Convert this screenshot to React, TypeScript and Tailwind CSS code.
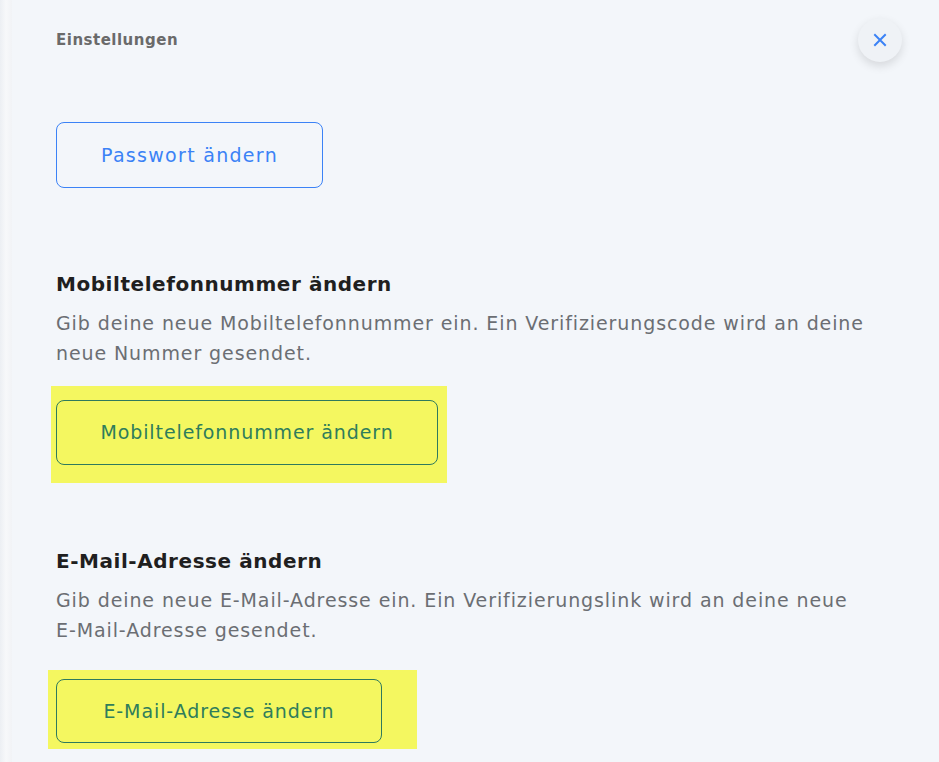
import React from "react";

const font = { fontFamily: '"DejaVu Sans", "Noto Sans", sans-serif' };

const Section = ({ title, children, label, hlClass, btnClass }: any) => (
  <div className="flex flex-col">
    <h2 className="text-[20px] font-bold text-[#1f1f1f] leading-[28px] tracking-[0.55px]">{title}</h2>
    <p className="mt-[10px] text-[19px] leading-[30px] text-[#6b6e73] tracking-[0.9px]">{children}</p>
    <div className={`bg-[#f4f760] self-start ${hlClass}`}>
      <button className={`rounded-[8px] border border-[#2f7a5d] text-[#2f7d5b] text-[19px] tracking-[0.9px] ${btnClass}`}>
        {label}
      </button>
    </div>
  </div>
);

export default function App() {
  return (
    <div className="w-[939px] h-[762px] bg-[#f3f6fa] flex flex-row overflow-hidden" style={font}>
      <div className="w-[12px] shrink-0 bg-gradient-to-r from-[#eceff3] via-[#f7f8fa] to-[#f1f3f6]" />
      <div className="flex-1 flex flex-col pl-[44px] pr-[37px]">
        <div className="flex items-center justify-between h-[80px]">
          <span className="text-[15px] font-bold text-[#6a6a6a] tracking-[0.5px]">Einstellungen</span>
          <button className="w-[44px] h-[44px] rounded-full bg-[#eff2f6] shadow-[0_4px_10px_rgba(0,0,0,0.12)] flex items-center justify-center">
            <svg width="16" height="16" viewBox="0 0 16 16" fill="none" stroke="#3b82f6" strokeWidth="2" strokeLinecap="square">
              <path d="M3 3L13 13M13 3L3 13" />
            </svg>
          </button>
        </div>

        <button className="mt-[42px] w-[267px] h-[66px] rounded-[8px] border border-[#3b82f6] text-[#3b82f6] text-[19px] tracking-[1.3px]">
          Passwort ändern
        </button>

        <div className="mt-[82px]">
          <Section
            title="Mobiltelefonnummer ändern"
            label="Mobiltelefonnummer ändern"
            hlClass="mt-[18px] -ml-[5px] pl-[5px] pr-[9px] pt-[14px] pb-[18px]"
            btnClass="w-[382px] h-[65px]"
          >
            Gib deine neue Mobiltelefonnummer ein. Ein Verifizierungscode wird an deine neue Nummer gesendet.
          </Section>
        </div>

        <div className="mt-[64px]">
          <Section
            title="E-Mail-Adresse ändern"
            label="E-Mail-Adresse ändern"
            hlClass="mt-[25px] -ml-[8px] pl-[8px] pr-[35px] pt-[9px] pb-[6px]"
            btnClass="w-[326px] h-[64px]"
          >
            Gib deine neue <span className="whitespace-nowrap">E-Mail-Adresse</span> ein. Ein Verifizierungslink wird an deine neue <span className="whitespace-nowrap">E-Mail-Adresse</span> gesendet.
          </Section>
        </div>
      </div>
    </div>
  );
}
